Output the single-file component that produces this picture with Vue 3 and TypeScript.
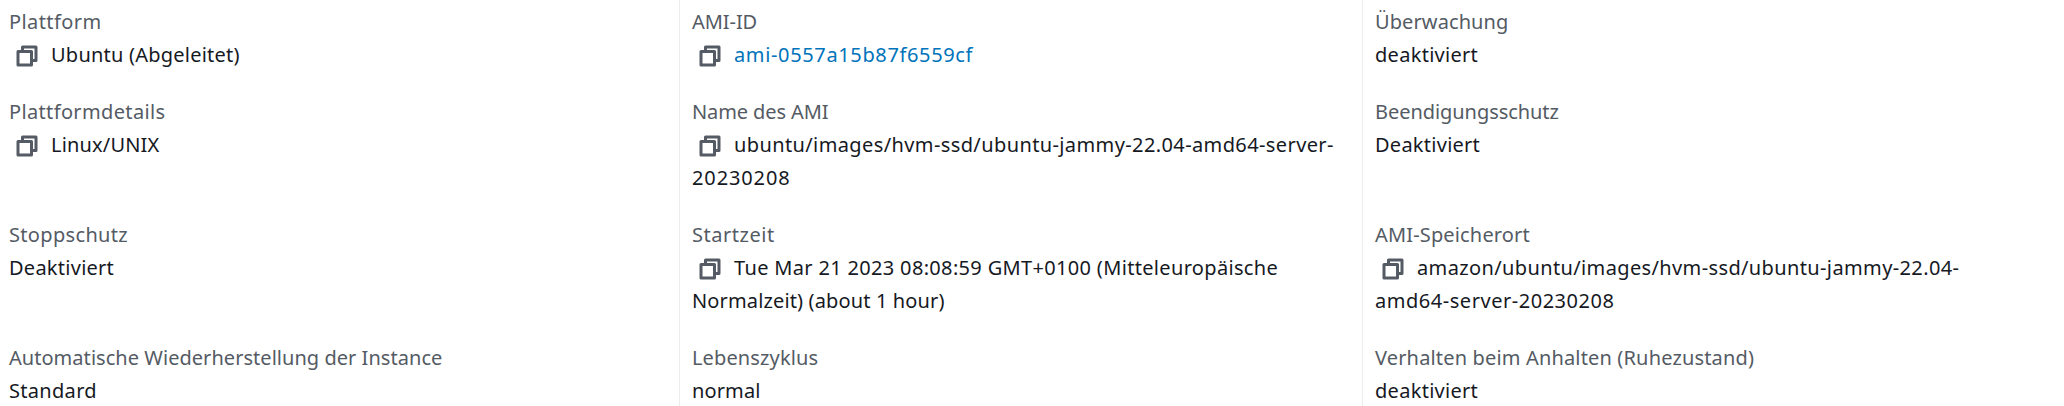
<script setup lang="ts">
interface Line { text: string; tracking: number }
interface Field { label: Line; lines: Line[]; copy?: boolean; link?: boolean }

const t = (text: string, tracking: number): Line => ({ text, tracking })

const rows: Field[][] = [
  [
    { label: t('Plattform', 0.418), lines: [t('Ubuntu (Abgeleitet)', 0.228)], copy: true },
    { label: t('AMI-ID', -0.064), lines: [t('ami-0557a15b87f6559cf', 0.64)], copy: true, link: true },
    { label: t('Überwachung', 0.092), lines: [t('deaktiviert', 0.288)] },
  ],
  [
    { label: t('Plattformdetails', 0.353), lines: [t('Linux/UNIX', 0.169)], copy: true },
    {
      label: t('Name des AMI', -0.098),
      lines: [t('ubuntu/images/hvm-ssd/ubuntu-jammy-22.04-amd64-server-', 0.389), t('20230208', 0.874)],
      copy: true,
    },
    { label: t('Beendigungsschutz', -0.056), lines: [t('Deaktiviert', 0.258)] },
  ],
  [
    { label: t('Stoppschutz', 0.328), lines: [t('Deaktiviert', 0.258)] },
    {
      label: t('Startzeit', 0.533),
      lines: [t('Tue Mar 21 2023 08:08:59 GMT+0100 (Mitteleuropäische', 0.331), t('Normalzeit) (about 1 hour)', 0.139)],
      copy: true,
    },
    {
      label: t('AMI-Speicherort', 0.156),
      lines: [t('amazon/ubuntu/images/hvm-ssd/ubuntu-jammy-22.04-', 0.372), t('amd64-server-20230208', 0.531)],
      copy: true,
    },
  ],
  [
    { label: t('Automatische Wiederherstellung der Instance', 0.04), lines: [t('Standard', 0.306)] },
    { label: t('Lebenszyklus', 0.129), lines: [t('normal', 0.132)] },
    { label: t('Verhalten beim Anhalten (Ruhezustand)', 0.16), lines: [t('deaktiviert', 0.288)] },
  ],
]

const spacing = (line: Line) => ({ letterSpacing: `${line.tracking}px` })
</script>

<template>
  <main class="details">
    <div v-for="(row, r) in rows" :key="r" class="row">
      <dl v-for="field in row" :key="field.label.text" class="field">
        <dt class="label" :style="spacing(field.label)">{{ field.label.text }}</dt>
        <dd class="value">
          <div v-for="(line, i) in field.lines" :key="i" class="line">
            <svg v-if="field.copy && i === 0" class="copy" viewBox="0 0 16 16" aria-hidden="true">
              <path d="M2 5h9v9H2z" />
              <path d="M5 5V2h9v9h-3" />
            </svg>
            <a v-if="field.link" class="link" :style="spacing(line)">{{ line.text }}</a>
            <span v-else :style="spacing(line)">{{ line.text }}</span>
          </div>
        </dd>
      </dl>
    </div>
  </main>
</template>

<style scoped>
.details {
  box-sizing: border-box;
  width: 2064px;
  height: 406px;
  overflow: hidden;
  background: #fff;
  color: #16191f;
  font: 20px/33px "Noto Sans", "Open Sans", sans-serif;
  white-space: nowrap;
}
.row {
  display: grid;
  grid-template-columns: 679px 683px 702px;
}
.field {
  box-sizing: border-box;
  margin: 0;
  padding: 5px 0 19px 9px;
}
.field + .field {
  border-left: 1px solid #eaeded;
  padding-left: 12px;
}
.label {
  color: #545b64;
}
.value {
  margin: 0;
}
.line {
  display: flex;
  align-items: center;
  height: 33px;
}
.copy {
  flex: none;
  width: 24px;
  height: 24px;
  margin: 3px 12px 0 6px;
  fill: none;
  stroke: #545b64;
  stroke-width: 2;
  stroke-linejoin: round;
}
.link {
  color: #0073bb;
}
</style>

<style>
body {
  margin: 0;
  background: #fff;
}
</style>
